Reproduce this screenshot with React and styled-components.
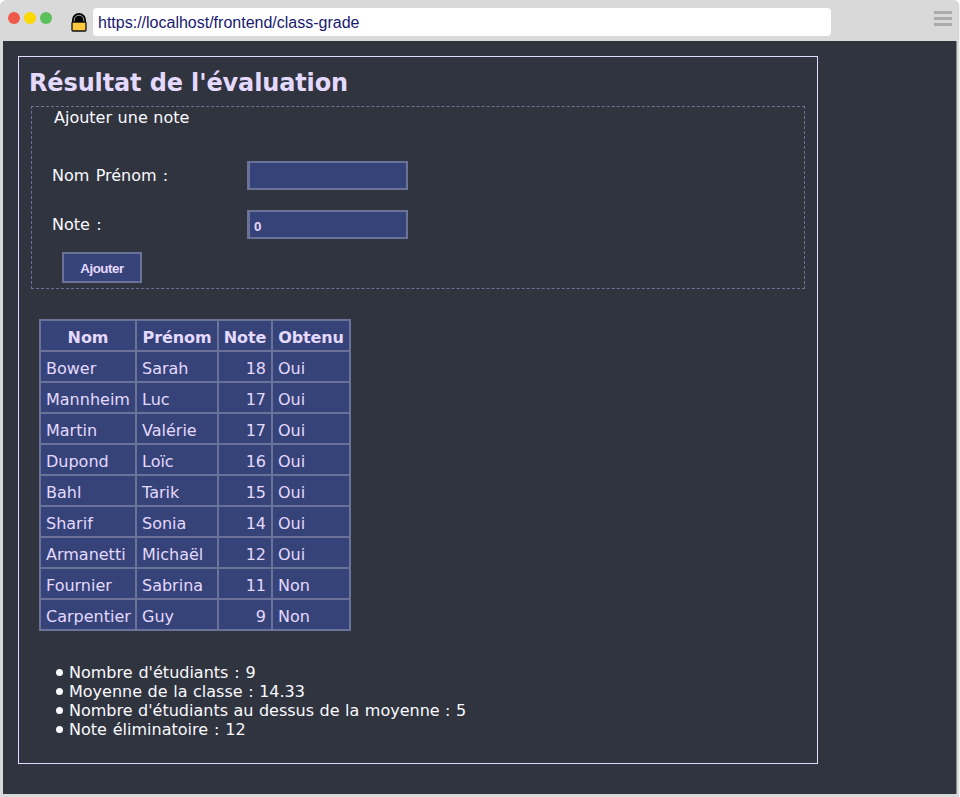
import React from "react";
import styled, { createGlobalStyle } from "styled-components";

const GlobalStyle = createGlobalStyle`
  * { box-sizing: border-box; }
  body { margin: 0; background: #fff; font-family: "DejaVu Sans", sans-serif; }
`;

const Window = styled.div`
  width: 960px;
  height: 797px;
  padding: 0 2px 3px 3px;
  border-right: 1px solid #f3f3f3;
  background: #d9d9d9;
  border-radius: 6px 6px 0 0;
  overflow: hidden;
`;

const Toolbar = styled.header`
  display: flex;
  height: 41px;
  padding: 8px 5px 0 5px;
`;

const Dots = styled.div`
  display: flex;
  gap: 4px;
  padding-top: 4px;
`;

const Dot = styled.span`
  width: 12px;
  height: 12px;
  border-radius: 50%;
  background: ${(p) => p.$color};
`;

const LockIcon = styled.svg`
  width: 16px;
  height: 19px;
  margin: 5px 6px 0 19px;
`;

const Address = styled.div`
  width: 738px;
  height: 28px;
  padding-left: 5px;
  border-radius: 4px;
  background: #fff;
  color: #191970;
  font: 16px/29px "Liberation Sans", sans-serif;
`;

const MenuButton = styled.div`
  display: flex;
  flex-direction: column;
  gap: 3px;
  width: 18px;
  margin: 3px 0 0 auto;
`;

const MenuBar = styled.span`
  height: 3px;
  background: #aaa;
`;

const Page = styled.main`
  height: 753px;
  padding: 15px;
  background: #30343f;
  border-right: 1px solid #898b90;
`;

const Panel = styled.section`
  width: 800px;
  height: 708px;
  padding: 10px 12px 0;
  border: 1px solid #e4d9ff;
`;

const Title = styled.h1`
  margin: 0 0 0 -2px;
  height: 39px;
  color: #e4d9ff;
  font-size: 24px;
  line-height: 33px;
  letter-spacing: -0.13px;
`;

const Form = styled.form`
  width: 774px;
  height: 183px;
  padding-left: 20px;
  border: 1px dashed #6b7299;
`;

const Legend = styled.div`
  height: 54px;
  padding-left: 2px;
  color: #fafaff;
  font-size: 16px;
  line-height: 22px;
  word-spacing: 0.5px;
`;

const Field = styled.label`
  display: grid;
  grid-template-columns: 195px 161px;
  height: 29px;
  margin-bottom: ${(p) => p.$gap};
  color: #fafaff;
  font-size: 16px;
  line-height: 29px;
  word-spacing: 1.2px;
`;

const Input = styled.input`
  width: 161px;
  height: 29px;
  margin: 0;
  padding: 4px 4px 0;
  border: 2px solid #6b7299;
  border-width: 2px 2px 2px 3px;
  border-radius: 0;
  outline: 0;
  background: #364378;
  color: #e4d9ff;
  font: bold 13.33px "Liberation Sans", sans-serif;
`;

const Submit = styled.button`
  display: block;
  width: 80px;
  height: 31px;
  margin: 0 0 0 10px;
  padding: 2px 0 0;
  border: 2px solid #6b7299;
  background: #364378;
  color: #e4d9ff;
  font: bold 13.33px "Liberation Sans", sans-serif;
  letter-spacing: -0.48px;
`;

const Table = styled.table`
  width: 312px;
  margin: 30px 0 0 8px;
  border-collapse: collapse;
  table-layout: fixed;
  background: #364378;
  color: #e4d9ff;
  font-size: 16px;
`;

const Column = styled.col`
  width: ${(p) => p.$width}px;
`;

const Row = styled.tr`
  height: 31px;
`;

const HeadCell = styled.th`
  padding: 4px 0 0;
  border: 2px solid #6b7299;
  line-height: 25px;
  white-space: nowrap;
  letter-spacing: -0.1px;
`;

const Cell = styled.td`
  padding: 4px 5px 0;
  border: 2px solid #6b7299;
  line-height: 25px;
  white-space: nowrap;
  text-align: ${(p) => p.$align || "left"};
`;

const Stats = styled.ul`
  margin: 32px 0 0;
  padding: 0 0 0 38px;
  color: #fafaff;
  font-size: 16px;
  line-height: 19px;
  list-style: none;
`;

const Stat = styled.li`
  display: flex;
  align-items: center;
  margin-left: -13.5px;
  height: 19px;
  word-spacing: ${(p) => p.$spacing}px;

  &::before {
    content: "";
    width: 7px;
    height: 7px;
    margin-right: 6.5px;
    border-radius: 50%;
    background: #fafaff;
  }
`;

const students = [
  ["Bower", "Sarah", 18, "Oui"],
  ["Mannheim", "Luc", 17, "Oui"],
  ["Martin", "Valérie", 17, "Oui"],
  ["Dupond", "Loïc", 16, "Oui"],
  ["Bahl", "Tarik", 15, "Oui"],
  ["Sharif", "Sonia", 14, "Oui"],
  ["Armanetti", "Michaël", 12, "Oui"],
  ["Fournier", "Sabrina", 11, "Non"],
  ["Carpentier", "Guy", 9, "Non"],
];

const stats = [
  { text: "Nombre d'étudiants : 9", spacing: 0.8 },
  { text: "Moyenne de la classe : 14.33", spacing: 0.5 },
  { text: "Nombre d'étudiants au dessus de la moyenne : 5", spacing: 0.4 },
  { text: "Note éliminatoire : 12", spacing: 0.8 },
];

export default function App() {
  return (
    <>
      <GlobalStyle />
      <Window>
        <Toolbar>
          <Dots>
            <Dot $color="#ed594a" />
            <Dot $color="#fdd800" />
            <Dot $color="#5ac05a" />
          </Dots>
          <LockIcon viewBox="0 0 16 19">
            <path d="M2 9V7a6 6 0 0 1 12 0v2" fill="#000" stroke="#000" strokeWidth="2" />
            <path d="M3.2 9V7a4.8 4.8 0 0 1 9.6 0v2" fill="none" stroke="#aaa" strokeWidth="1" />
            <rect x="1" y="9" width="14" height="9" rx="1" fill="#ffc83d" stroke="#111" strokeWidth="1.3" />
          </LockIcon>
          <Address>https://localhost/frontend/class-grade</Address>
          <MenuButton>
            <MenuBar />
            <MenuBar />
            <MenuBar />
          </MenuButton>
        </Toolbar>
        <Page>
          <Panel>
            <Title>Résultat de l'évaluation</Title>
            <Form>
              <Legend>Ajouter une note</Legend>
              <Field $gap="20px">
                Nom Prénom :
                <Input type="text" />
              </Field>
              <Field $gap="13px">
                Note :
                <Input type="text" defaultValue="0" />
              </Field>
              <Submit type="button">Ajouter</Submit>
            </Form>
            <Table>
              <colgroup>
                <Column $width={96} />
                <Column $width={82} />
                <Column $width={54} />
                <Column $width={78} />
              </colgroup>
              <thead>
                <Row>
                  <HeadCell>Nom</HeadCell>
                  <HeadCell>Prénom</HeadCell>
                  <HeadCell>Note</HeadCell>
                  <HeadCell>Obtenu</HeadCell>
                </Row>
              </thead>
              <tbody>
                {students.map(([last, first, grade, passed]) => (
                  <Row key={last}>
                    <Cell>{last}</Cell>
                    <Cell>{first}</Cell>
                    <Cell $align="right">{grade}</Cell>
                    <Cell>{passed}</Cell>
                  </Row>
                ))}
              </tbody>
            </Table>
            <Stats>
              {stats.map(({ text, spacing }) => (
                <Stat key={text} $spacing={spacing}>{text}</Stat>
              ))}
            </Stats>
          </Panel>
        </Page>
      </Window>
    </>
  );
}
